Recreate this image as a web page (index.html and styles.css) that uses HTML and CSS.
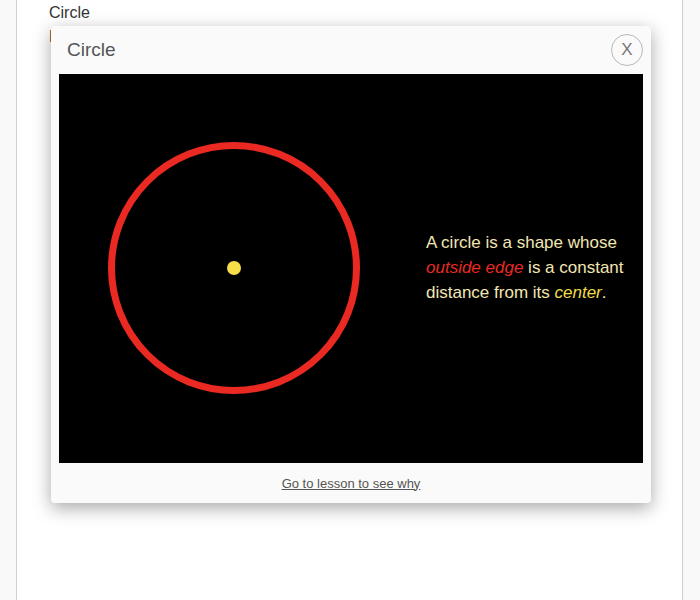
FILE: index.html
```html
<!DOCTYPE html>
<html>
<head>
<meta charset="utf-8">
<link rel="stylesheet" href="styles.css">
</head>
<body>
<div class="page">
  <div class="content">
    <p class="line">Circle</p>
    <p class="line">Defined</p>
  </div>
</div>
<div class="modal">
  <div class="modal-header">
    <h2 class="modal-title">Circle</h2>
    <button class="close">X</button>
  </div>
  <div class="stage">
    <svg class="stage-svg" width="584" height="389" viewBox="0 0 584 389">
      <rect width="584" height="389" fill="#000"/>
      <circle cx="175" cy="194" r="122.5" fill="none" stroke="#ea2a22" stroke-width="7"/>
      <circle cx="175" cy="194" r="7" fill="#f8de48"/>
    </svg>
    <p class="caption">A circle is a shape whose <em class="red">outside edge</em> is a constant distance from its <em class="yellow">center</em>.</p>
  </div>
  <div class="modal-footer">
    <a class="lesson-link" href="#">Go to lesson to see why</a>
  </div>
</div>
</body>
</html>
```

FILE: styles.css
```css
html, body {
  margin: 0;
  padding: 0;
  height: 100%;
}
body {
  background: #f9f9f9;
  font-family: "Liberation Sans", Arial, sans-serif;
  overflow: hidden;
}
.page {
  margin-left: 16px;
  width: 665px;
  height: 600px;
  background: #fff;
  border-left: 1px solid #d0d0d0;
  border-right: 1px solid #d0d0d0;
}
.content {
  padding: 4px 0 0 32px;
}
.line {
  margin: 0;
  font-size: 16px;
  line-height: 18px;
  color: #333;
  padding-bottom: 6px;
}
.modal {
  position: absolute;
  left: 51px;
  top: 26px;
  width: 600px;
  height: 477px;
  background: #fafafa;
  border-radius: 4px;
  box-shadow: 0 5px 18px rgba(0,0,0,0.35);
  display: flex;
  flex-direction: column;
}
.modal-header {
  height: 48px;
  display: flex;
  align-items: center;
  justify-content: space-between;
  padding: 0 8px 0 16px;
}
.modal-title {
  margin: 0;
  font-weight: normal;
  font-size: 19px;
  color: #555;
}
.close {
  width: 32px;
  height: 32px;
  border-radius: 50%;
  border: 1px solid #b8b8b8;
  background: #fafafa;
  color: #777;
  font-family: "Liberation Sans", Arial, sans-serif;
  font-size: 17px;
  padding: 0;
  display: flex;
  align-items: center;
  justify-content: center;
}
.stage {
  position: relative;
  margin: 0 8px;
  width: 584px;
  height: 389px;
  background: #000;
}
.stage-svg {
  display: block;
}
.caption {
  position: absolute;
  left: 367px;
  top: 156px;
  width: 214px;
  margin: 0;
  font-size: 17px;
  line-height: 25px;
  color: #f2e6b2;
}
.caption em.red {
  color: #ea2a22;
}
.caption em.yellow {
  color: #f3dc48;
}
.modal-footer {
  height: 40px;
  display: flex;
  align-items: center;
  justify-content: center;
}
.lesson-link {
  font-size: 13px;
  color: #555;
  text-decoration: underline;
}
```
